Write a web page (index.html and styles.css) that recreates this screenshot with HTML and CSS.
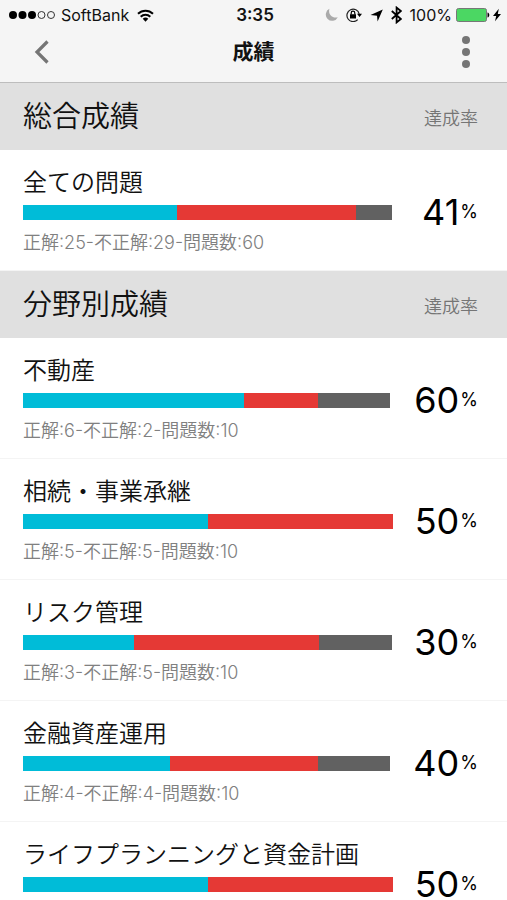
FILE: index.html
```html
<!DOCTYPE html>
<html lang="ja">
<head>
<meta charset="utf-8">
<meta name="viewport" content="width=device-width, initial-scale=1">
<title>成績</title>
<link rel="stylesheet" href="styles.css">
</head>
<body>
<header class="header">
  <div class="status">
    <div class="status-left">
      <svg width="46" height="10" viewBox="0 0 46 10" aria-hidden="true"><circle cx="4" cy="5" r="4"/><circle cx="13.5" cy="5" r="4"/><circle cx="23" cy="5" r="4"/><g fill="none" stroke="#333"><circle cx="32.5" cy="5" r="3.5"/><circle cx="42" cy="5" r="3.5"/></g></svg>
      <span>SoftBank</span>
      <svg class="wifi" width="17" height="13" viewBox="0 0 17 13" aria-hidden="true"><g fill="none" stroke="#000" stroke-width="2"><path d="M1 4.8a10.6 10.6 0 0 1 15 0"/><path d="M3.7 7.7a6.8 6.8 0 0 1 9.6 0"/></g><path d="M8.5 12.7 5.7 9.8a4 4 0 0 1 5.6 0z"/></svg>
    </div>
    <time class="clock">3:35</time>
    <div class="status-right">
      <svg width="13" height="14" viewBox="0 0 13 14" aria-hidden="true"><path fill="#aaa" d="M4.4.8A6.3 6.3 0 1 0 12.8 9.2C8 10.800 2.800 7 4.400.8z"/></svg>
      <svg class="lock" width="16" height="14" viewBox="0 0 16 14" aria-hidden="true"><path fill="none" stroke="#222" stroke-width="1.2" d="M11.7 11.6A6.2 6.2 0 1 1 13.2 6"/><path d="M11 5.800h5l-2.500 3.200zM4 6.300h6v4.200H4z"/><path fill="none" stroke="#000" stroke-width="1.2" d="M5.200 6.600V5a1.800 1.800 0 0 1 3.600 0v1.600"/></svg>
      <svg class="arrow" width="13" height="13" viewBox="0 0 13 13" aria-hidden="true"><path d="M12.800.500 7.600 12.500 7 6.700.500 6.100z"/></svg>
      <svg class="bluetooth" width="11" height="18" viewBox="0 0 11 18" aria-hidden="true"><path fill="none" stroke="#000" stroke-width="1.800" d="m.8 5 9 8-4.200 3.400V1.600L9.800 5l-9 8"/></svg>
      <span>100%</span>
      <svg class="battery" width="34" height="14" viewBox="0 0 34 14" aria-hidden="true"><rect x=".5" y=".5" width="30" height="13" rx="2" fill="#4bd763" stroke="#777"/><path d="M31.500 4.500c2.400.6 2.400 4.400 0 5z"/></svg>
      <svg class="bolt" width="8" height="14" viewBox="0 0 8 14" aria-hidden="true"><path d="M5.800.800 0 8h3.200L2 13.200 8 6H4.800z"/></svg>
    </div>
  </div>
  <div class="nav">
    <button class="icon-button" type="button" aria-label="戻る"><svg width="16" height="24" viewBox="0 0 16 24" aria-hidden="true"><path fill="none" stroke="#757575" stroke-width="3.200" d="M14.500 1.500 4 12l10.500 10.500"/></svg></button>
    <h1 class="title">成績</h1>
    <button class="icon-button menu" type="button" aria-label="メニュー"><svg width="8" height="32" viewBox="0 0 8 32" aria-hidden="true"><g fill="#757575"><circle cx="4" cy="4" r="4"/><circle cx="4" cy="16" r="4"/><circle cx="4" cy="28" r="4"/></g></svg></button>
  </div>
</header>
<main>
  <section>
    <div class="section-head"><h2>総合成績</h2><span>達成率</span></div>
    <article class="row">
      <h3>全ての問題</h3>
      <div class="bar"><i class="correct" style="width:41.5%"></i><i class="wrong" style="width:48.4%"></i><i class="rest" style="width:9.7%"></i></div>
      <p class="rate">41<small>%</small></p>
      <p class="meta">正解:25-不正解:29-問題数:60</p>
    </article>
  </section>
  <section>
    <div class="section-head"><h2>分野別成績</h2><span>達成率</span></div>
    <article class="row">
      <h3>不動産</h3>
      <div class="bar"><i class="correct" style="width:59.8%"></i><i class="wrong" style="width:19.8%"></i><i class="rest" style="width:19.7%"></i></div>
      <p class="rate">60<small>%</small></p>
      <p class="meta">正解:6-不正解:2-問題数:10</p>
    </article>
    <article class="row">
      <h3>相続・事業承継</h3>
      <div class="bar"><i class="correct" style="width:50%"></i><i class="wrong" style="width:50%"></i></div>
      <p class="rate">50<small>%</small></p>
      <p class="meta">正解:5-不正解:5-問題数:10</p>
    </article>
    <article class="row">
      <h3>リスク管理</h3>
      <div class="bar"><i class="correct" style="width:30%"></i><i class="wrong" style="width:50%"></i><i class="rest" style="width:19.6%"></i></div>
      <p class="rate">30<small>%</small></p>
      <p class="meta">正解:3-不正解:5-問題数:10</p>
    </article>
    <article class="row">
      <h3>金融資産運用</h3>
      <div class="bar"><i class="correct" style="width:39.8%"></i><i class="wrong" style="width:39.8%"></i><i class="rest" style="width:19.7%"></i></div>
      <p class="rate">40<small>%</small></p>
      <p class="meta">正解:4-不正解:4-問題数:10</p>
    </article>
    <article class="row">
      <h3>ライフプランニングと資金計画</h3>
      <div class="bar"><i class="correct" style="width:50%"></i><i class="wrong" style="width:50%"></i></div>
      <p class="rate">50<small>%</small></p>
    </article>
  </section>
</main>
</body>
</html>
```
FILE: styles.css
```css
* {
  box-sizing: border-box;
  margin: 0;
}

body {
  font-family: Inter, "Noto Sans CJK JP", sans-serif;
  color: #111;
  background: #fff;
}

svg {
  display: block;
  flex: none;
}

.header {
  background: #f5f5f5;
  border-bottom: 1px solid #bdbdbd;
}

.status {
  display: grid;
  grid-template-columns: 1fr auto 1fr;
  align-items: center;
  height: 30px;
  padding: 0 6px 0 9px;
  font-size: 16px;
  line-height: 20px;
}

.status-left,
.status-right {
  display: flex;
  align-items: center;
}

.status-left {
  gap: 6px;
}

.status-right {
  justify-content: flex-end;
}

.wifi {
  margin-left: 2px;
}

.clock {
  font-size: 17px;
  font-weight: 600;
}

.lock,
.arrow,
.bluetooth {
  margin-left: 8px;
}

.status-right span {
  margin: 0 4px 0 8px;
}

.bolt {
  margin-left: 3px;
}

.nav {
  display: grid;
  grid-template-columns: 60px 1fr 60px;
  align-items: center;
  height: 52px;
  padding: 0 11px 8px;
}

.title {
  text-align: center;
  font-size: 21px;
  line-height: 32px;
  font-weight: 700;
}

.icon-button {
  display: flex;
  align-items: center;
  justify-content: center;
  height: 44px;
  padding: 0;
  border: 0;
  background: none;
}

.menu {
  width: 60px;
}

.section-head {
  display: flex;
  align-items: center;
  justify-content: space-between;
  height: 67px;
  padding: 0 29px 0 23px;
  background: #e0e0e0;
}

.section-head h2 {
  font-size: 29px;
  line-height: 40px;
  font-weight: 350;
}

.section-head span {
  font-family: "Noto Sans CJK JP", sans-serif;
  font-size: 18px;
  line-height: 24px;
  font-weight: 350;
  color: #757575;
}

.row {
  display: grid;
  grid-template-columns: 1fr 85px;
  grid-template-rows: 28px 30px;
  padding: 19px 29px 11px 23px;
  border-bottom: 1px solid #f4f4f4;
}

.row h3 {
  grid-column: 1 / -1;
  font-size: 24px;
  line-height: 28px;
  font-weight: 350;
}

.bar {
  display: flex;
  align-self: center;
  height: 15px;
}

.correct {
  background: #00bcd8;
}

.wrong {
  background: #e53935;
}

.rest {
  background: #616161;
}

.rate {
  display: flex;
  align-items: center;
  justify-content: flex-end;
  gap: 1px;
  font-size: 36px;
  line-height: 30px;
  color: #000;
}

.rate small {
  font-size: 18px;
}

.meta {
  grid-column: 1 / -1;
  font-size: 18px;
  line-height: 32px;
  font-weight: 350;
  color: #808080;
}
```
